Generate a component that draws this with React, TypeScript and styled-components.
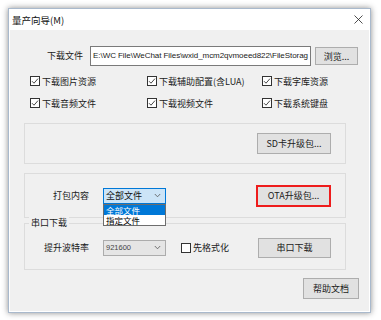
import React from "react";
import styled, { createGlobalStyle } from "styled-components";

const Global = createGlobalStyle`
  html, body { margin: 0; padding: 0; background: #ffffff; }
  body { font-family: "Noto Sans CJK SC", "Microsoft YaHei", sans-serif; color: #1a1a1a; }
  * { box-sizing: border-box; }
`;

const Page = styled.div`
  width: 381px;
  height: 320px;
  padding: 8px 10px 7px 8px;
`;

const Window = styled.div`
  width: 363px;
  height: 305px;
  background: #ffffff;
  border: 1px solid #a9b9cc;
  box-shadow: 0 0 6px rgba(0, 0, 0, 0.45);
  padding: 0 1px 1px 1px;
  display: flex;
  flex-direction: column;
`;

const TitleBar = styled.div`
  height: 21px;
  display: flex;
  align-items: center;
  justify-content: space-between;
  padding: 0 6px 0 2px;
  font-size: 9.5px;
  color: #111;
`;

const Body = styled.div`
  flex: 1;
  background: #f0f0f0;
  display: flex;
  flex-direction: column;
  padding-top: 16px;
  font-size: 9px;
`;

const FileRow = styled.div`
  display: flex;
  align-items: center;
  height: 20px;
`;

const Label = styled.div<{ $w: number }>`
  width: ${(p) => p.$w}px;
  text-align: right;
  font-size: 9px;
  line-height: 12px;
  white-space: nowrap;
`;

const PathInput = styled.div`
  margin-left: 7px;
  width: 221px;
  height: 20px;
  background: #ffffff;
  border: 1px solid #7a7a7a;
  font-family: "Liberation Sans", Arial, sans-serif;
  font-size: 8px;
  letter-spacing: -0.05px;
  line-height: 18px;
  padding-left: 2px;
  white-space: nowrap;
  overflow: hidden;
`;

const Button = styled.div<{ $w: number; $h: number; $red?: boolean }>`
  width: ${(p) => p.$w}px;
  height: ${(p) => p.$h}px;
  background: #e1e1e1;
  border: ${(p) => (p.$red ? "2px solid #ee1c1c" : "1px solid #adadad")};
  display: flex;
  align-items: center;
  justify-content: center;
  font-size: 9px;
  white-space: nowrap;
  flex-shrink: 0;
`;

const BrowseButton = styled(Button)`
  margin-left: 4px;
`;

const CheckGrid = styled.div`
  margin-top: 4px;
  padding-left: 20px;
  display: grid;
  grid-template-columns: 117px 115px auto;
  grid-auto-rows: 22px;
`;

const CheckItem = styled.div`
  display: flex;
  align-items: center;
  gap: 2px;
  white-space: nowrap;
  font-size: 9px;
`;

const Box = styled.span`
  width: 10px;
  height: 10px;
  border: 1px solid #333;
  background: #fff;
  display: inline-flex;
  align-items: center;
  justify-content: center;
  flex-shrink: 0;
`;

const Group = styled.div<{ $h: number; $mt: number }>`
  position: relative;
  margin-left: 14px;
  margin-top: ${(p) => p.$mt}px;
  width: 322px;
  height: ${(p) => p.$h}px;
  border: 1px solid #dcdcdc;
  display: flex;
  align-items: center;
`;

const Legend = styled.span`
  position: absolute;
  left: 4px;
  top: -7px;
  padding: 0 2px;
  background: #f0f0f0;
  font-size: 9px;
  line-height: 12px;
`;

const GroupRow = styled.div<{ $pt: number }>`
  display: flex;
  align-items: center;
  width: 100%;
  padding-top: ${(p) => p.$pt}px;
`;

const Spacer = styled.div`
  flex: 1;
`;

const SelectWrap = styled.div`
  position: relative;
  margin-left: 14px;
`;

const Select = styled.div<{ $focus?: boolean }>`
  width: 63px;
  height: 16px;
  background: ${(p) => (p.$focus ? "#cce4f7" : "#e5e5e5")};
  border: 1px solid ${(p) => (p.$focus ? "#0078d7" : "#acacac")};
  display: flex;
  align-items: center;
  justify-content: space-between;
  padding: 0 4px 0 2px;
  font-size: ${(p) => (p.$focus ? "9px" : "7.5px")};
  color: ${(p) => (p.$focus ? "#111" : "#444")};
  font-family: ${(p) =>
    p.$focus ? '"Noto Sans CJK SC", sans-serif' : '"Liberation Sans", Arial, sans-serif'};
`;

const DropList = styled.div`
  position: absolute;
  left: 0;
  top: 16px;
  width: 63px;
  background: #fff;
  border: 1px solid #6d6d6d;
  display: flex;
  flex-direction: column;
  z-index: 2;
`;

const DropItem = styled.div<{ $sel?: boolean }>`
  height: 10px;
  line-height: 10px;
  font-size: 8.5px;
  padding-left: 2px;
  background: ${(p) => (p.$sel ? "#0078d7" : "#fff")};
  color: ${(p) => (p.$sel ? "#fff" : "#000")};
  white-space: nowrap;
`;

const FormatCheck = styled(CheckItem)`
  margin-left: 15px;
`;

const RightButtonSlot = styled.div`
  padding-right: 14px;
`;

const HelpRow = styled.div`
  display: flex;
  justify-content: flex-end;
  margin-top: 8px;
  padding-right: 10px;
`;

const Check = () => (
  <Box>
    <svg width="8" height="8" viewBox="0 0 8 8">
      <path d="M1 4.2 L3 6.2 L7 1.6" fill="none" stroke="#333" strokeWidth="0.9" />
    </svg>
  </Box>
);

const Chevron = () => (
  <svg width="7" height="5" viewBox="0 0 7 5">
    <path d="M0.8 1 L3.5 3.8 L6.2 1" fill="none" stroke="#555" strokeWidth="0.8" />
  </svg>
);

const Close = () => (
  <svg width="9" height="9" viewBox="0 0 9 9">
    <path d="M0.5 0.5 L8.5 8.5 M8.5 0.5 L0.5 8.5" stroke="#222" strokeWidth="0.8" />
  </svg>
);

const checks = [
  "下载图片资源",
  "下载辅助配置(含LUA)",
  "下载字库资源",
  "下载音频文件",
  "下载视频文件",
  "下载系统键盘",
];

export default function App() {
  return (
    <>
      <Global />
      <Page>
        <Window>
          <TitleBar>
            <span>量产向导(M)</span>
            <Close />
          </TitleBar>
          <Body>
            <FileRow>
              <Label $w={73}>下载文件</Label>
              <PathInput>E:\WC File\WeChat Files\wxid_mcm2qvmoeed822\FileStorag</PathInput>
              <BrowseButton $w={43} $h={18}>浏览...</BrowseButton>
            </FileRow>
            <CheckGrid>
              {checks.map((c) => (
                <CheckItem key={c}>
                  <Check />
                  {c}
                </CheckItem>
              ))}
            </CheckGrid>
            <Group $h={41} $mt={9}>
              <GroupRow $pt={0}>
                <Spacer />
                <RightButtonSlot>
                  <Button $w={74} $h={21}>SD卡升级包...</Button>
                </RightButtonSlot>
              </GroupRow>
            </Group>
            <Group $h={45} $mt={9}>
              <GroupRow $pt={0}>
                <Label $w={64}>打包内容</Label>
                <SelectWrap>
                  <Select $focus>
                    <span>全部文件</span>
                    <Chevron />
                  </Select>
                  <DropList>
                    <DropItem $sel>全部文件</DropItem>
                    <DropItem>指定文件</DropItem>
                  </DropList>
                </SelectWrap>
                <Spacer />
                <RightButtonSlot>
                  <Button $w={75} $h={22} $red>OTA升级包...</Button>
                </RightButtonSlot>
              </GroupRow>
            </Group>
            <Group $h={47} $mt={5}>
              <Legend>串口下载</Legend>
              <GroupRow $pt={2}>
                <Label $w={64}>提升波特率</Label>
                <SelectWrap>
                  <Select>
                    <span>921600</span>
                    <Chevron />
                  </Select>
                </SelectWrap>
                <FormatCheck>
                  <Box />
                  先格式化
                </FormatCheck>
                <Spacer />
                <RightButtonSlot>
                  <Button $w={73} $h={20}>串口下载</Button>
                </RightButtonSlot>
              </GroupRow>
            </Group>
            <HelpRow>
              <Button $w={56} $h={21}>帮助文档</Button>
            </HelpRow>
          </Body>
        </Window>
      </Page>
    </>
  );
}
